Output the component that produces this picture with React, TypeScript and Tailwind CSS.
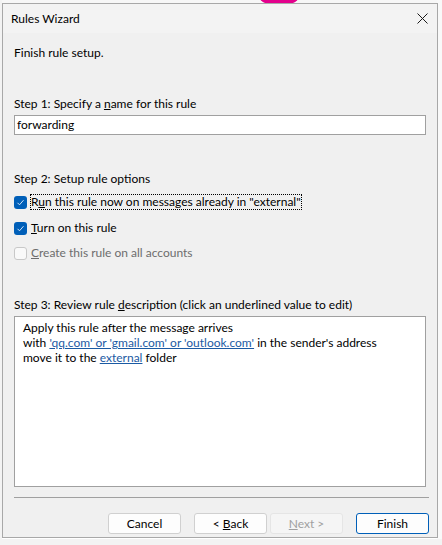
import React from 'react';

const font = { fontFamily: 'Lato, "Noto Sans", "Liberation Sans", sans-serif' };

function Check({ checked, disabled }: { checked?: boolean; disabled?: boolean }) {
  if (checked) {
    return (
      <span className="w-[13px] h-[13px] rounded-[3px] bg-[#005fb8] grid place-items-center shrink-0">
        <svg width="9" height="9" viewBox="0 0 9 9">
          <path d="M1.5 4.8 L3.5 6.8 L7.5 2.2" fill="none" stroke="#cfe3f7" strokeWidth="1" />
        </svg>
      </span>
    );
  }
  return (
    <span className={`w-[13px] h-[13px] rounded-[3px] border shrink-0 ${disabled ? 'border-[#c8c8c8] bg-[#f9f9f9]' : 'border-[#888] bg-white'}`} />
  );
}

function Btn({ children, primary, disabled }: { children: React.ReactNode; primary?: boolean; disabled?: boolean }) {
  return (
    <button
      className={`w-[73px] h-[21px] rounded-[3px] text-[12px] leading-none border ${
        primary
          ? 'border-[#005fb8] bg-[#fdfdfd] text-black'
          : disabled
          ? 'border-[#e5e5e5] bg-[#f5f5f5] text-[#a0a0a0]'
          : 'border-[#d0d0d0] bg-[#fdfdfd] text-black'
      }`}
    >
      {children}
    </button>
  );
}

export default function App() {
  return (
    <div className="relative w-[442px] h-[545px] bg-white overflow-hidden" style={font}>
      {/* window behind the dialog */}
      <div className="absolute left-[0px] top-[0px] w-[442px] h-[3px] bg-[#f7f7f7]" />
      <div className="absolute left-[257px] top-[-22px] w-[44px] h-[26px] rounded-full bg-[#e3008c]" />
      <div className="absolute left-[0px] top-[0px] w-[2px] h-[545px] bg-[#f3f3f3]" />
      <div className="absolute left-[437px] top-[0px] w-[5px] h-[545px] bg-[#f9f9f9]" />
      <div className="absolute left-0 top-[539px] w-[442px] h-[6px] bg-[#f3f3f3]" />

      <div className="relative ml-[2px] mt-[3px] w-[436px] h-[535px] border border-[#a8a8a8] bg-[#f0f0f0] flex flex-col text-[12px] text-black">
        <div className="h-[29px] bg-[#f3f3f3] flex items-center justify-between pl-[8px] pr-[7px]">
          <span className="text-[12px] leading-[16px]">Rules Wizard</span>
          <svg width="11" height="11" viewBox="0 0 11 11" className="mr-[2px]">
            <path d="M0.5 0.5 L10.5 10.5 M10.5 0.5 L0.5 10.5" stroke="#1a1a1a" strokeWidth="1" />
          </svg>
        </div>

        <div className="flex flex-col pl-[11px] pr-[8px]">
          <div className="mt-[12px] leading-[16px]">Finish rule setup.</div>

          <div className="mt-[35px] leading-[16px]">
            Step 1: Specify a <span className="underline">n</span>ame for this rule
          </div>
          <div className="mt-[3px] mr-[3px] h-[20px] bg-white border border-[#a0a0a0] flex items-center pl-[2px] leading-[16px]">
            forwarding
          </div>

          <div className="mt-[36px] leading-[16px]">Step 2: Setup rule options</div>
          <div className="mt-[7px] h-[16px] flex items-center gap-[3px]">
            <Check checked />
            <span className="border border-dotted border-black leading-[14px]">
              R<span className="underline">u</span>n this rule now on messages already in "external"
            </span>
          </div>
          <div className="mt-[10px] h-[16px] flex items-center gap-[4px]">
            <Check checked />
            <span className="leading-[16px]">
              <span className="underline">T</span>urn on this rule
            </span>
          </div>
          <div className="mt-[9px] h-[16px] flex items-center gap-[4px] text-[#6d6d6d]">
            <Check disabled />
            <span className="leading-[16px]">
              <span className="underline">C</span>reate this rule on all accounts
            </span>
          </div>

          <div className="mt-[36px] leading-[16px]">
            Step 3: Review rule <span className="underline">d</span>escription (click an underlined value to edit)
          </div>
          <div className="mt-[3px] mr-[3px] h-[171px] bg-white border border-[#a0a0a0] pl-[8px] pt-[3px] leading-[15px]">
            <div>Apply this rule after the message arrives</div>
            <div>
              with <span className="text-[#1b5aa3] underline">'qq.com' or 'gmail.com' or 'outlook.com'</span> in the sender's address
            </div>
            <div>
              move it to the <span className="text-[#1b5aa3] underline">external</span> folder
            </div>
          </div>

          <div className="mt-[10px] h-px bg-[#a0a0a0]" />

          <div className="mt-[15px] flex justify-end">
            <Btn>Cancel</Btn>
            <div className="w-[13px]" />
            <Btn>
              &lt; <span className="underline">B</span>ack
            </Btn>
            <div className="w-[3px]" />
            <Btn disabled>
              <span className="underline">N</span>ext &gt;
            </Btn>
            <div className="w-[13px]" />
            <Btn primary>Finish</Btn>
          </div>
        </div>
      </div>
    </div>
  );
}
